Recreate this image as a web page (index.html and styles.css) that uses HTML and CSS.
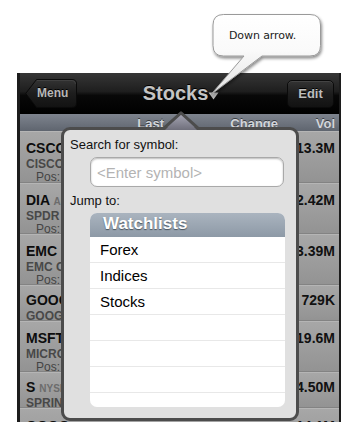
FILE: index.html
```html
<!DOCTYPE html>
<html>
<head>
<meta charset="utf-8">
<link rel="stylesheet" href="styles.css">
</head>
<body>
<div class="stage">
  <div class="screen">
    <div class="navbar">
      <div class="nav-left">
        <div class="btn-back">
          <svg class="btn-back-bg" width="52" height="29" viewBox="0 0 52 29">
            <defs>
              <linearGradient id="gb" x1="0" y1="0" x2="0" y2="1">
                <stop offset="0" stop-color="#333"/>
                <stop offset="0.5" stop-color="#1d1d1d"/>
                <stop offset="1" stop-color="#121212"/>
              </linearGradient>
            </defs>
            <path d="M11.5 0.5 H47 Q51.5 0.5 51.5 5 V24 Q51.5 28.5 47 28.5 H11.5 L0.7 14.5 Z" fill="url(#gb)" stroke="#0a0a0a" stroke-width="1"/>
            <path d="M12 1.5 H47 Q50.5 1.5 50.5 5" fill="none" stroke="#444" stroke-width="0.8"/>
          </svg>
          <span class="btn-label">Menu</span>
        </div>
      </div>
      <div class="title">
        <span>Stocks</span>
        <svg class="title-arrow" width="11" height="8" viewBox="0 0 11 8"><path d="M0.5 0.5 H10.5 L5.5 7.5 Z" fill="#bdbdbd"/></svg>
      </div>
      <div class="nav-right">
        <div class="btn">Edit</div>
      </div>
    </div>
    <div class="colhead cols">
      <span></span><span class="num">Last</span><span class="num">Change</span><span class="num">Vol</span>
    </div>
    <div class="rows">
      <div class="row tall cols">
        <div class="sym-cell"><div class="sym">CSCO <span class="exch">NASDAQ</span></div><div class="co">CISCO SYSTEMS</div><div class="pos">Pos: 0</div></div>
        <div></div><div></div><div class="num">13.3M</div>
      </div>
      <div class="row tall cols">
        <div class="sym-cell"><div class="sym">DIA <span class="exch">AMEX</span></div><div class="co">SPDR DJIA</div><div class="pos">Pos: 0</div></div>
        <div></div><div></div><div class="num">12.42M</div>
      </div>
      <div class="row tall cols">
        <div class="sym-cell"><div class="sym">EMC <span class="exch">NYSE</span></div><div class="co">EMC CORP</div><div class="pos">Pos: 0</div></div>
        <div></div><div></div><div class="num">13.39M</div>
      </div>
      <div class="row short cols">
        <div class="sym-cell"><div class="sym">GOOG <span class="exch">NASDAQ</span></div><div class="co">GOOGLE INC</div></div>
        <div></div><div></div><div class="num">729K</div>
      </div>
      <div class="row tall cols">
        <div class="sym-cell"><div class="sym">MSFT <span class="exch">NASDAQ</span></div><div class="co">MICROSOFT</div><div class="pos">Pos: 0</div></div>
        <div></div><div></div><div class="num">19.6M</div>
      </div>
      <div class="row short cols">
        <div class="sym-cell"><div class="sym">S <span class="exch">NYSE</span></div><div class="co">SPRINT NEXTEL</div></div>
        <div></div><div></div><div class="num">14.50M</div>
      </div>
      <div class="row tall cols">
        <div class="sym-cell"><div class="sym">QQQQ <span class="exch">NASDAQ</span></div><div class="co">POWERSHARES</div><div class="pos">Pos: 0</div></div>
        <div></div><div></div><div class="num">14.1M</div>
      </div>
    </div>
  </div>

  <div class="popup">
    <svg class="popup-arrow" width="36" height="19" viewBox="0 0 36 19">
      <defs>
        <linearGradient id="ga" x1="0" y1="0" x2="0" y2="1">
          <stop offset="0" stop-color="#a6a5b3"/>
          <stop offset="1" stop-color="#6f6f7b"/>
        </linearGradient>
      </defs>
      <path d="M2 19 L18 3 L34 19 Z" fill="url(#ga)"/>
      <path d="M0.5 17.5 L18 1.8 L35.5 17.5" fill="none" stroke="#4c4c4c" stroke-width="3" stroke-linejoin="round"/>
    </svg>
    <div class="label">Search for symbol:</div>
    <div class="field">&lt;Enter symbol&gt;</div>
    <div class="label jump">Jump to:</div>
    <div class="list">
      <div class="list-head">Watchlists</div>
      <div class="list-row">Forex</div>
      <div class="list-row">Indices</div>
      <div class="list-row">Stocks</div>
      <div class="list-row"></div>
      <div class="list-row"></div>
      <div class="list-row"></div>
      <div class="list-row"></div>
    </div>
  </div>

  <div class="callout">
    <svg class="callout-bg" width="353" height="100" viewBox="0 0 353 100">
      <defs>
        <linearGradient id="gc" x1="0" y1="0" x2="0" y2="1">
          <stop offset="0" stop-color="#ffffff"/>
          <stop offset="0.45" stop-color="#fafafa"/>
          <stop offset="1" stop-color="#e2e2e2"/>
        </linearGradient>
        <filter id="sh" x="-20%" y="-20%" width="140%" height="140%">
          <feDropShadow dx="1" dy="2" stdDeviation="1.4" flood-color="#000" flood-opacity="0.45"/>
        </filter>
      </defs>
      <path d="M223.5 14.5 H310 Q320.5 14.5 320.5 25 V45.5 Q320.5 56 310 56 H262 L211 94.5 L244 56 H223.5 Q213 56 213 45.5 V25 Q213 14.5 223.5 14.5 Z" fill="url(#gc)" stroke="#9a9a9a" stroke-width="1" filter="url(#sh)"/>
    </svg>
    <span class="callout-text">Down arrow.</span>
  </div>
</div>
</body>
</html>
```

FILE: styles.css
```css
* { box-sizing: border-box; }
html, body { margin: 0; padding: 0; background: #ffffff; }
body { width: 353px; height: 434px; overflow: hidden; font-family: "Liberation Sans", Arial, sans-serif; }

.stage { position: relative; width: 353px; height: 434px; overflow: hidden; padding: 73px 0 0 17px; }

.screen {
  width: 324px; height: 349px;
  border-left: 3px solid #1c1c1c; border-right: 2px solid #1c1c1c;
  background: #1c1c1c; overflow: hidden;
}

.navbar {
  height: 41px; display: grid; grid-template-columns: 1fr auto 1fr; align-items: center;
  padding: 0 5px;
  background: linear-gradient(180deg, #363636 0%, #1e1e1e 45%, #080808 55%, #000 100%);
}
.nav-left { display: flex; justify-content: flex-start; }
.nav-right { display: flex; justify-content: flex-end; }

.btn-back { position: relative; width: 52px; height: 29px; }
.btn-back-bg { position: absolute; left: 0; top: 0; }
.btn-label {
  position: relative; display: block; padding-left: 12px;
  font-size: 12px; font-weight: bold; line-height: 29px; color: #b8b8b8;
  text-shadow: 0 -1px 0 #000;
}

.btn {
  width: 47px; height: 28px; border-radius: 5px; border: 1px solid #0a0a0a;
  background: linear-gradient(180deg, #333 0%, #1d1d1d 50%, #121212 100%);
  box-shadow: inset 0 1px 0 #444;
  font-size: 13px; font-weight: bold; line-height: 26px; text-align: center; color: #bdbdbd;
  text-shadow: 0 -1px 0 #000;
}

.title { display: flex; align-items: center; padding-left: 3px; color: #c4c4c4; font-size: 20px; font-weight: bold; text-shadow: 0 -1px 0 #000; }
.title-arrow { margin-left: 0; margin-top: 5px; }

.cols { display: grid; grid-template-columns: 80px 64px 114px 57px; padding-right: 4px; }
.num { text-align: right; }

.colhead {
  height: 17px; padding-top: 3px;
  background: linear-gradient(180deg, #7e848e 0%, #5f656f 100%);
  font-size: 13px; font-weight: bold; line-height: 14px; color: #d2d5da;
  text-shadow: 0 -1px 0 rgba(0,0,0,0.5);
}

.rows { background: #939393; }
.row {
  background: linear-gradient(180deg, #a7a7a7 0%, #939393 100%);
  border-top: 1px solid #b5b5b5; border-bottom: 1px solid #838383;
  font-size: 14px; font-weight: bold; line-height: 16px; color: #111;
}
.row.tall { height: 51px; padding-top: 8px; }
.row.short { height: 36px; padding-top: 6px; }
.row:first-child { height: 52px; }
.row:last-child { padding-top: 9px; }

.sym-cell { padding-left: 6px; white-space: nowrap; }
.sym { font-size: 14px; line-height: 16px; color: #0d0d0d; }
.exch { font-size: 10px; color: #6c6c6c; }
.co { font-size: 12px; line-height: 13px; color: #484848; }
.pos { font-size: 12px; font-weight: normal; line-height: 13px; color: #444; padding-left: 10px; }

.popup {
  position: absolute; left: 61px; top: 127px; width: 238px; height: 294px;
  border: 3px solid #4c4c4c; border-radius: 9px; background: #e0e0e0;
  padding: 7px 0 0 6px;
}
.popup-arrow { position: absolute; left: 99px; top: -19px; }

.label { font-size: 13px; line-height: 16px; color: #111; }
.label.jump { margin-top: 6px; }

.field {
  margin: 4px 0 0 20px; width: 194px; height: 30px;
  border: 1px solid #a9a9a9; border-radius: 7px; background: #fff;
  box-shadow: inset 0 1px 2px rgba(0,0,0,0.28);
  padding: 2px 0 0 6px; font-size: 15px; line-height: 26px; color: #b3b3b3;
}

.list {
  margin: 4px 0 0 20px; width: 195px; height: 194px;
  border-radius: 7px; overflow: hidden; background: #fff;
}
.list-head {
  height: 24px; padding-left: 13px;
  background: linear-gradient(180deg, #aab4bf 0%, #8d99a6 100%);
  font-size: 17px; font-weight: bold; line-height: 22px; color: #fff;
  text-shadow: 0 1px 1px rgba(40,50,60,0.7);
}
.list-row {
  height: 26px; border-bottom: 1px solid #e8e8e8; padding-left: 10px;
  font-size: 15px; line-height: 25px; color: #000;
}

.callout { position: absolute; left: 0; top: 0; width: 353px; height: 100px; }
.callout-bg { position: absolute; left: 0; top: 0; }
.callout-text {
  position: absolute; left: 229px; top: 29px;
  font-family: "DejaVu Sans", sans-serif; font-size: 11px; line-height: 13px; color: #222;
  letter-spacing: -0.1px;
}
```
